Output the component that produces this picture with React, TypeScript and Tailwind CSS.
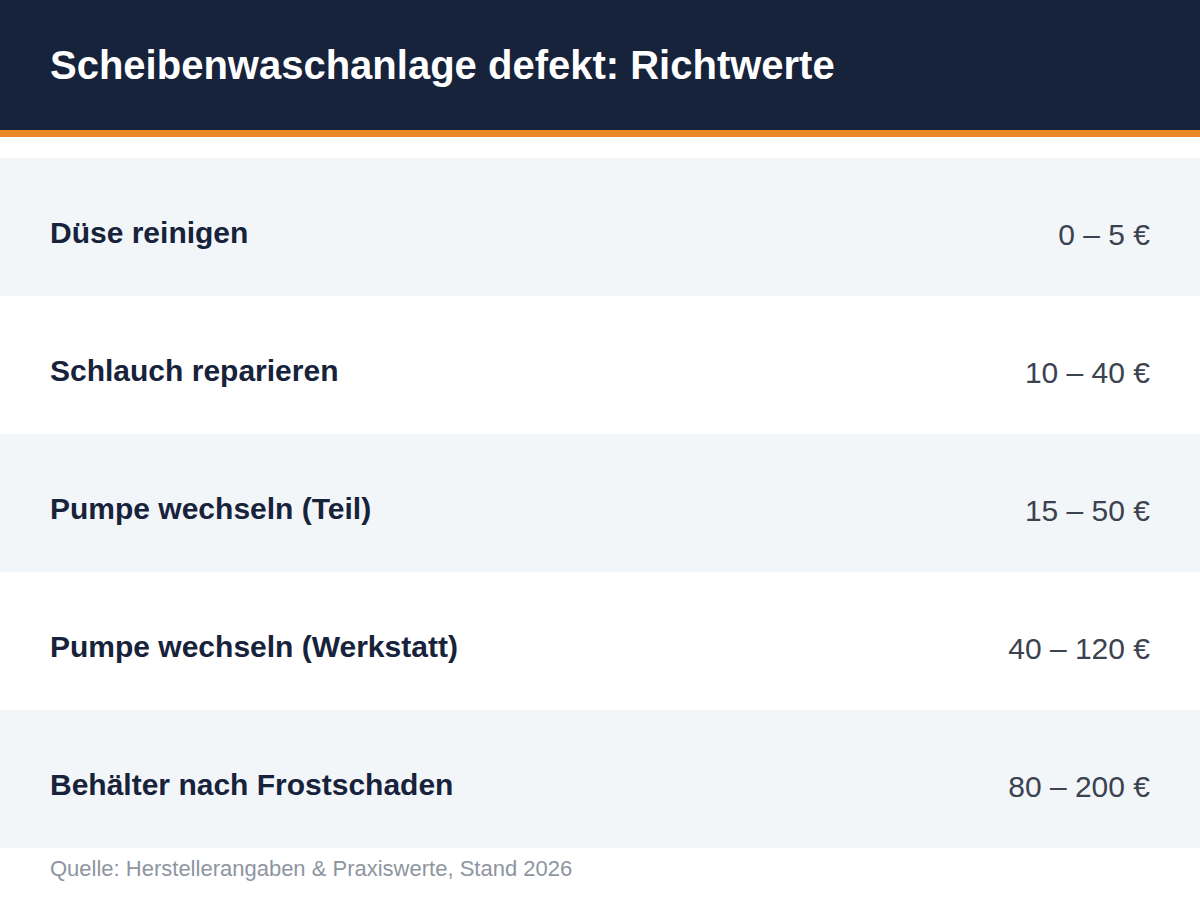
import React from "react";

const rows = [
  ["Düse reinigen", "0 – 5 €"],
  ["Schlauch reparieren", "10 – 40 €"],
  ["Pumpe wechseln (Teil)", "15 – 50 €"],
  ["Pumpe wechseln (Werkstatt)", "40 – 120 €"],
  ["Behälter nach Frostschaden", "80 – 200 €"],
];

export default function App() {
  return (
    <div className="w-[1200px] h-[900px] bg-white" style={{ fontFamily: '"Liberation Sans", Arial, sans-serif' }}>
      <div className="h-[130px] bg-[#17223b] flex items-center px-[50px]">
        <h1 className="text-[40px] font-bold text-white leading-none">Scheibenwaschanlage defekt: Richtwerte</h1>
      </div>
      <div className="h-[7px] bg-[#e98626]" />
      <div className="mt-[21px]">
        {rows.map(([label, value], i) => (
          <div
            key={label}
            className={`h-[138px] flex items-center justify-between px-[50px] pt-[12px] ${i % 2 === 0 ? "bg-[#f3f6f9]" : "bg-white"}`}
          >
            <span className="text-[30px] font-bold text-[#17223b] leading-none">{label}</span>
            <span className="text-[30px] text-[#3b4250] leading-none pt-[4px]">{value}</span>
          </div>
        ))}
      </div>
      <div className="px-[50px] pt-[10px] text-[22px] text-[#8e959f] leading-none">
        Quelle: Herstellerangaben &amp; Praxiswerte, Stand 2026
      </div>
    </div>
  );
}
